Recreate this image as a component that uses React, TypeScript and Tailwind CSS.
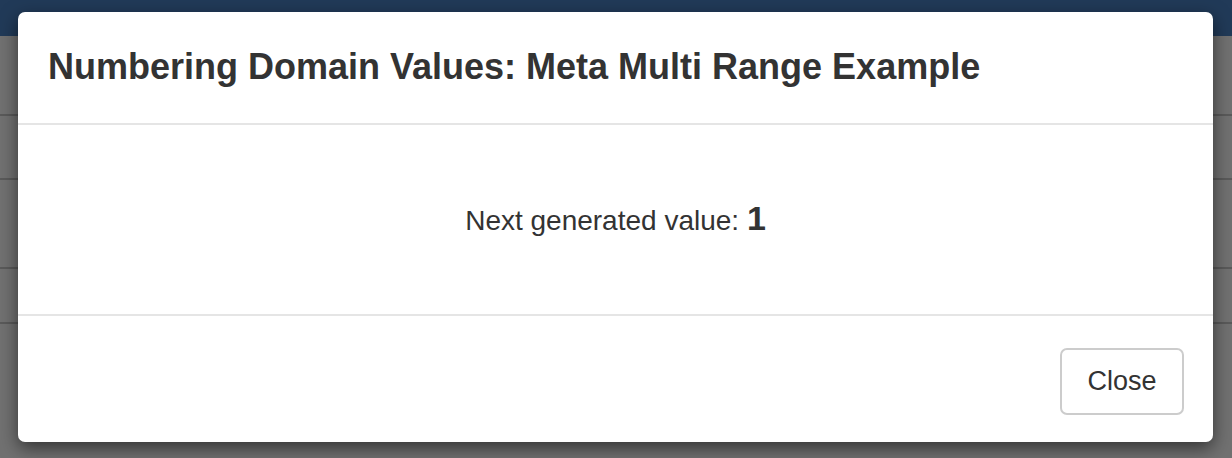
export default function App() {
  return (
    <div className="relative h-[458px] w-[1232px] overflow-hidden bg-[#717171] font-[family-name:'Liberation_Sans',Arial,sans-serif] text-[#333]">
      {/* page behind the backdrop */}
      <div className="h-[36px] bg-[#213a58]" />
      <div className="flex flex-col">
        <div className="h-[80px] border-b-2 border-[#5a5a5a]" />
        <div className="h-[64px] border-b-2 border-[#5a5a5a]" />
        <div className="h-[89px] border-b-2 border-[#5a5a5a]" />
        <div className="h-[55px] border-b-2 border-[#5a5a5a]" />
      </div>

      {/* modal */}
      <div className="absolute left-[18px] top-[12px] w-[1195px] rounded-[7px] bg-white shadow-[0_6px_18px_rgba(0,0,0,0.55)]">
        <div className="flex h-[113px] items-center border-b-2 border-[#e5e5e5] px-[30px] pb-[2px]">
          <h4 className="text-[36px] font-bold leading-none text-[#333]">
            Numbering Domain Values: Meta Multi Range Example
          </h4>
        </div>
        <div className="flex h-[189px] items-center justify-center pb-[2px]">
          <p className="text-[28px] text-[#333]">
            Next generated value: <b className="text-[34px]">1</b>
          </p>
        </div>
        <div className="flex h-[128px] items-center justify-end border-t-2 border-[#e5e5e5] px-[29px] pt-[4px]">
          <button className="h-[67px] w-[124px] rounded-[7px] border-2 border-[#ccc] bg-white text-[27px] text-[#333]">
            Close
          </button>
        </div>
      </div>
    </div>
  );
}
